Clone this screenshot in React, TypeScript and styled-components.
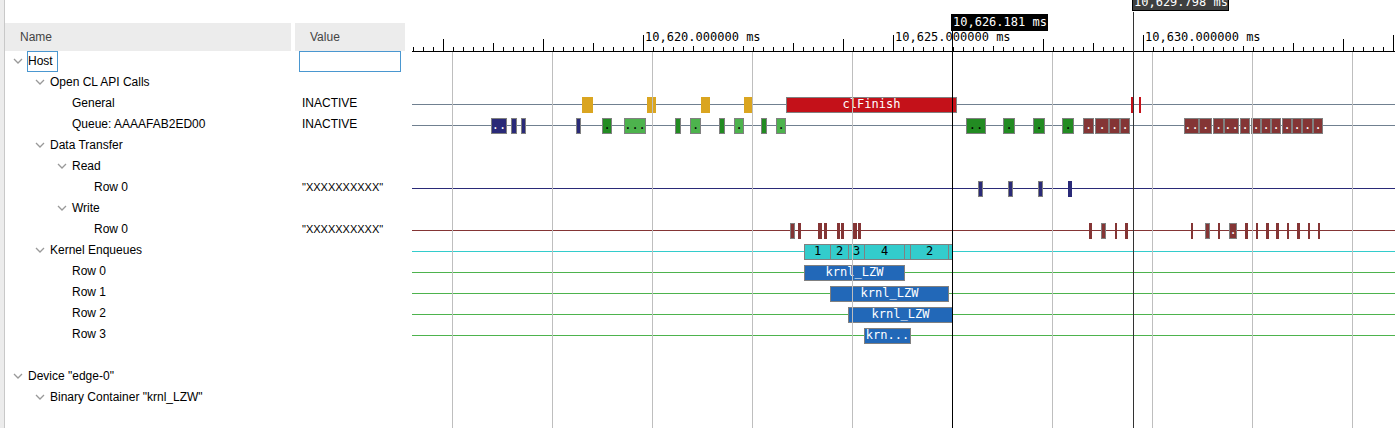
import React from "react";
import styled, { createGlobalStyle } from "styled-components";

const colors = {
  navy: "#2a2a78",
  forest: "#228b22",
  green: "#4db34d",
  gold: "#daa520",
  red: "#c41119",
  maroon: "#843535",
  cyan: "#33cccc",
  blue: "#2268b8",
  slate: "#708090",
};
type Color = keyof typeof colors;

const GlobalStyle = createGlobalStyle`
  * { box-sizing: border-box; }
  body {
    margin: 0;
    background: #fff;
    color: #000;
    font: 12px/21px "Liberation Sans", Arial, sans-serif;
  }
`;

const Page = styled.main`
  display: grid;
  grid-template-columns: 5px 400px minmax(0, 1fr);
  min-height: 100vh;
  overflow: hidden;
`;

const Gutter = styled.div`
  background: #ececec;
  border-right: 1px solid #c8c8c8;
`;

const Tree = styled.table`
  width: 100%;
  margin-top: 23px;
  align-self: start;
  table-layout: fixed;
  border-collapse: separate;
  border-spacing: 0;
`;

const Heading = styled.th<{ $width: number }>`
  width: ${(p) => p.$width}px;
  height: 28px;
  padding: 0 15px;
  background: #ececec;
  background-clip: padding-box;
  color: #444;
  font-weight: normal;
  text-align: left;
  & + & { border-left: 4px solid #fff; }
`;

const Cell = styled.td`
  height: 21px;
  padding: 0 4px 0 7px;
  white-space: nowrap;
`;

const NameBox = styled.div<{ $depth: number }>`
  display: flex;
  height: 21px;
  padding-left: ${(p) => p.$depth * 22}px;
`;

const Toggle = styled.button`
  display: flex;
  align-items: center;
  justify-content: center;
  width: 12px;
  height: 20px;
  margin-right: 3px;
  padding: 0;
  border: 0;
  background: none;
`;

const ToggleSpace = styled.span`
  width: 15px;
`;

const Label = styled.span<{ $selected?: boolean }>`
  height: 21px;
  line-height: 19px;
  padding-right: 4px;
  border: 1px solid ${(p) => (p.$selected ? "#4a97d0" : "transparent")};
`;

const ValueText = styled.span<{ $small: boolean }>`
  padding-left: 4px;
  font-size: ${(p) => (p.$small ? 11 : 12)}px;
`;

const ValueInput = styled.input`
  display: block;
  width: 102px;
  height: 21px;
  margin-left: 1px;
  padding: 0 3px;
  border: 1px solid #4a97d0;
  background: #fff;
  font: inherit;
  outline: none;
`;

const Timeline = styled.section`
  position: relative;
  margin-left: 7px;
  overflow: hidden;
  font: 12px/14px "DejaVu Sans Mono", monospace;
  white-space: nowrap;
`;

const Ruler = styled.div`
  display: flex;
  align-items: flex-end;
  height: 52px;
  padding-left: 1px;
  border-bottom: 1px solid #000;
`;

const Tick = styled.div<{ $height: number }>`
  flex: none;
  width: 10px;
  height: ${(p) => p.$height}px;
  border-left: 1px solid #000;
`;

const TickLabel = styled.span`
  display: block;
  width: max-content;
  margin-top: -5px;
  padding-left: 1px;
`;

const Track = styled.div<{ $line?: Color }>`
  position: relative;
  height: 21px;
  background: ${(p) =>
    p.$line
      ? `linear-gradient(${colors[p.$line]}, ${colors[p.$line]}) 0 10px / 100% 1px no-repeat`
      : "none"};
`;

const Bar = styled.div<{ $color: Color; $outlined: boolean; $dark: boolean }>`
  position: absolute;
  top: 3px;
  display: flex;
  justify-content: center;
  height: 16px;
  border: ${(p) => (p.$outlined ? "1px solid #808080" : "0")};
  background: ${(p) => colors[p.$color]};
  color: ${(p) => (p.$dark ? "#000" : "#fff")};
  line-height: 12px;
  overflow: hidden;
`;

const GridLines = styled.div`
  position: absolute;
  top: 52px;
  bottom: 0;
  left: 40px;
  right: 0;
  background: repeating-linear-gradient(to right, #bebebe 0 1px, transparent 1px 100px);
  pointer-events: none;
`;

const CursorLine = styled.div<{ $top: number; $color: string }>`
  position: absolute;
  top: ${(p) => p.$top}px;
  bottom: 0;
  width: 1px;
  background: ${(p) => p.$color};
`;

const CursorLabel = styled.div<{ $top: number; $color: string }>`
  position: absolute;
  top: ${(p) => p.$top}px;
  height: 17px;
  padding-left: 1px;
  border: 1px solid #000;
  background: ${(p) => p.$color};
  color: #fff;
`;

interface TreeRow {
  name: string;
  depth: number;
  leaf?: boolean;
  value?: string;
}

const treeRows: (TreeRow | null)[] = [
  { name: "Host", depth: 0 },
  { name: "Open CL API Calls", depth: 1 },
  { name: "General", depth: 2, leaf: true, value: "INACTIVE" },
  { name: "Queue: AAAAFAB2ED00", depth: 2, leaf: true, value: "INACTIVE" },
  { name: "Data Transfer", depth: 1 },
  { name: "Read", depth: 2 },
  { name: "Row 0", depth: 3, leaf: true, value: '"XXXXXXXXXX"' },
  { name: "Write", depth: 2 },
  { name: "Row 0", depth: 3, leaf: true, value: '"XXXXXXXXXX"' },
  { name: "Kernel Enqueues", depth: 1 },
  { name: "Row 0", depth: 2, leaf: true },
  { name: "Row 1", depth: 2, leaf: true },
  { name: "Row 2", depth: 2, leaf: true },
  { name: "Row 3", depth: 2, leaf: true },
  null,
  { name: 'Device "edge-0"', depth: 0 },
  { name: 'Binary Container "krnl_LZW"', depth: 1 },
];

// Start and end are in timeline units of 20 microseconds, one unit per pixel.
type Event = [start: number, end: number, color: Color, text?: string];

const VIEW_START = 412;

const span = (color: Color, ...pairs: [number, number, string?][]): Event[] =>
  pairs.map(([a, b, text]) => [a, b, color, text]);

interface TrackData {
  line?: Color;
  events?: Event[];
}

const tracks: TrackData[] = [
  {},
  {},
  {
    line: "slate",
    events: [
      ...span("gold", [582, 593], [647, 656], [701, 710], [744, 752]),
      ...span("red", [786, 957, "clFinish"], [1131, 1133], [1139, 1141]),
    ],
  },
  {
    line: "slate",
    events: [
      ...span("navy", [491, 507, ".."], [511, 517], [521, 526], [576, 581]),
      ...span("forest", [602, 612, "."], [675, 681], [719, 725], [761, 767]),
      ...span("green", [624, 646, "..."], [690, 701, "."], [734, 744, "."], [776, 786, "."]),
      ...span("forest", [966, 986, ".."], [1003, 1015, "."], [1033, 1045, "."], [1062, 1074, "."]),
      ...span("maroon", [1083, 1094, "."], [1095, 1109, "."], [1109, 1120, "."], [1120, 1130, "."]),
      ...span("maroon", [1184, 1199, ".."], [1199, 1212, "."], [1213, 1224, "."], [1224, 1239, ".."]),
      ...span("maroon", [1240, 1250, "."], [1251, 1261, "."], [1261, 1271, "."], [1271, 1281, "."]),
      ...span("maroon", [1282, 1292, "."], [1292, 1302, "."], [1302, 1313, "."], [1313, 1323, "."]),
    ],
  },
  {},
  {},
  { line: "navy", events: span("navy", [978, 983], [1008, 1013], [1038, 1043], [1068, 1072]) },
  {},
  {
    line: "maroon",
    events: [
      ...span("maroon", [790, 795], [798, 801], [818, 822], [824, 827], [837, 840], [841, 844], [853, 857]),
      ...span("maroon", [858, 861], [1089, 1092], [1101, 1106], [1115, 1117], [1125, 1128], [1191, 1193]),
      ...span("maroon", [1205, 1210], [1218, 1220], [1229, 1237, "."], [1245, 1248], [1256, 1258]),
      ...span("maroon", [1266, 1269], [1276, 1279], [1287, 1289], [1297, 1300], [1308, 1310], [1318, 1320]),
    ],
  },
  {
    line: "cyan",
    events: span(
      "cyan",
      [804, 831, "1"],
      [830, 849, "2"],
      [848, 865, "3"],
      [864, 905, "4"],
      [904, 911],
      [910, 949, "2"],
      [948, 953]
    ),
  },
  { line: "green", events: span("blue", [804, 905, "krnl_LZW"]) },
  { line: "green", events: span("blue", [830, 949, "krnl_LZW"]) },
  { line: "green", events: span("blue", [848, 953, "krnl_LZW"]) },
  { line: "green", events: span("blue", [864, 911, "krn..."]) },
];

const darkText: Color[] = ["forest", "green", "cyan"];

const at = (x: number) => ({ left: x - VIEW_START });

const tallTicks: Record<number, number> = {
  443: 12, 493: 8, 543: 12, 593: 8, 643: 16, 693: 5, 743: 5, 793: 8, 843: 12, 893: 16,
  993: 5, 1043: 12, 1093: 8, 1143: 16, 1193: 5, 1243: 5, 1293: 8, 1343: 12, 1393: 16,
};
const ticks = Array.from({ length: 99 }, (_, i) => 413 + i * 10);

const tickLabels: Record<number, string> = {
  643: "10,620.000000 ms",
  893: "10,625.000000 ms",
  1143: "10,630.000000 ms",
};

function EventBar({ event: [start, end, color, text] }: { event: Event }) {
  const outlined = color !== "gold" && end - start > 4;
  return (
    <Bar
      $color={color}
      $outlined={outlined}
      $dark={darkText.includes(color)}
      style={{ ...at(start), width: end - start }}
    >
      {text}
    </Bar>
  );
}

function NameCell({ row }: { row: TreeRow }) {
  return (
    <NameBox $depth={row.depth}>
      {row.leaf ? (
        <ToggleSpace />
      ) : (
        <Toggle type="button" aria-label={`Collapse ${row.name}`} aria-expanded>
          <svg width="10" height="6" viewBox="0 0 10 6" fill="none" stroke="#999" strokeWidth="1.3">
            <path d="M1 1 L5 5 L9 1" />
          </svg>
        </Toggle>
      )}
      <Label $selected={row.name === "Host"}>{row.name}</Label>
    </NameBox>
  );
}

export default function App() {
  return (
    <>
      <GlobalStyle />
      <Page>
        <Gutter />
        <Tree>
          <thead>
            <tr>
              <Heading $width={286}>Name</Heading>
              <Heading $width={114}>Value</Heading>
            </tr>
          </thead>
          <tbody>
            {treeRows.map((row, i) => (
              <tr key={i}>
                <Cell>{row && <NameCell row={row} />}</Cell>
                <Cell>
                  {i === 0 ? (
                    <ValueInput aria-label="Host value" readOnly />
                  ) : (
                    row?.value && (
                      <ValueText $small={row.value.startsWith('"')}>{row.value}</ValueText>
                    )
                  )}
                </Cell>
              </tr>
            ))}
          </tbody>
        </Tree>
        <Timeline aria-label="Timeline">
          <Ruler>
            {ticks.map((x) => (
              <Tick key={x} $height={tallTicks[x] ?? 4}>
                {tickLabels[x] && <TickLabel>{tickLabels[x]}</TickLabel>}
              </Tick>
            ))}
          </Ruler>
          {tracks.map((track, i) => (
            <Track key={i} $line={track.line}>
              {track.events?.map((event) => (
                <EventBar key={event[0]} event={event} />
              ))}
            </Track>
          ))}
          <GridLines />
          <CursorLine $top={31} $color="#000" style={at(952)} />
          <CursorLabel $top={14} $color="#000" style={at(951)}>
            10,626.181 ms
          </CursorLabel>
          <CursorLine $top={12} $color="#333" style={at(1133)} />
          <CursorLabel $top={-6} $color="#3f3f3f" style={at(1132)}>
            10,629.798 ms
          </CursorLabel>
        </Timeline>
      </Page>
    </>
  );
}
